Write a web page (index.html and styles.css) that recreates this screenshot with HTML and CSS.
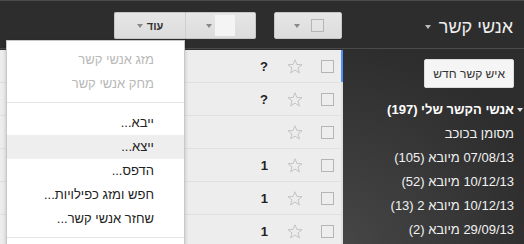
FILE: index.html
```html
<!DOCTYPE html>
<html lang="he" dir="rtl">
<head>
    <meta charset="UTF-8">
    <title>אנשי קשר</title>
    <link rel="stylesheet" href="styles.css">
</head>
<body>

<div class="topbar">
    <div class="app-title">אנשי קשר <span class="caret light"></span></div>
    <div class="toolbar">
        <div class="tb-btn select-btn">
            <span class="checkbox"></span>
            <span class="caret"></span>
        </div>
        <div class="btn-group">
            <div class="tb-btn group-btn">
                <span class="swatch"></span>
                <span class="caret"></span>
            </div>
            <div class="tb-btn more-btn">
                <span class="more-label">עוד</span>
                <span class="caret"></span>
                <div class="menu">
                    <div class="menu-item disabled">מזג אנשי קשר</div>
                    <div class="menu-item disabled">מחק אנשי קשר</div>
                    <div class="menu-sep"></div>
                    <div class="menu-item">ייבא...</div>
                    <div class="menu-item hover">ייצא...</div>
                    <div class="menu-item">הדפס...</div>
                    <div class="menu-item">חפש ומזג כפילויות...</div>
                    <div class="menu-item">שחזר אנשי קשר...</div>
                    <div class="menu-sep"></div>
                </div>
            </div>
        </div>
    </div>
</div>

<div class="main">
    <div class="sidebar">
        <button class="new-btn">איש קשר חדש</button>
        <div class="side-head"><span class="caret white"></span>אנשי הקשר שלי (197)</div>
        <div class="side-item">מסומן בכוכב</div>
        <div class="side-item">07/08/13 מיובא (105)</div>
        <div class="side-item">10/12/13 מיובא (52)</div>
        <div class="side-item">10/12/13 מיובא 2 (13)</div>
        <div class="side-item">29/09/13 מיובא (2)</div>
    </div>

    <div class="list">
        <div class="row current"><span class="checkbox"></span><svg class="star" viewBox="0 0 16 15"><polygon points="8,0.8 9.9,5.5 15,5.7 11,8.9 12.4,13.9 8,11.1 3.6,13.9 5,8.9 1,5.7 6.1,5.5"/></svg><span class="name">?</span></div>
        <div class="row"><span class="checkbox"></span><svg class="star" viewBox="0 0 16 15"><polygon points="8,0.8 9.9,5.5 15,5.7 11,8.9 12.4,13.9 8,11.1 3.6,13.9 5,8.9 1,5.7 6.1,5.5"/></svg><span class="name">?</span></div>
        <div class="row"><span class="checkbox"></span><svg class="star" viewBox="0 0 16 15"><polygon points="8,0.8 9.9,5.5 15,5.7 11,8.9 12.4,13.9 8,11.1 3.6,13.9 5,8.9 1,5.7 6.1,5.5"/></svg><span class="name"></span></div>
        <div class="row"><span class="checkbox"></span><svg class="star" viewBox="0 0 16 15"><polygon points="8,0.8 9.9,5.5 15,5.7 11,8.9 12.4,13.9 8,11.1 3.6,13.9 5,8.9 1,5.7 6.1,5.5"/></svg><span class="name">1</span></div>
        <div class="row"><span class="checkbox"></span><svg class="star" viewBox="0 0 16 15"><polygon points="8,0.8 9.9,5.5 15,5.7 11,8.9 12.4,13.9 8,11.1 3.6,13.9 5,8.9 1,5.7 6.1,5.5"/></svg><span class="name">1</span></div>
        <div class="row"><span class="checkbox"></span><svg class="star" viewBox="0 0 16 15"><polygon points="8,0.8 9.9,5.5 15,5.7 11,8.9 12.4,13.9 8,11.1 3.6,13.9 5,8.9 1,5.7 6.1,5.5"/></svg><span class="name">1</span></div>
    </div>
</div>

</body>
</html>
```

FILE: styles.css
```css
body, html {
    margin: 0;
    padding: 0;
    font-family: 'Liberation Sans', Arial, sans-serif;
    background-color: #2d2d2d;
    width: 524px;
    height: 244px;
    overflow: hidden;
}
.topbar {
    display: flex;
    height: 47px;
    border-top: 1px solid #4c4c4c;
    border-bottom: 1px solid #4a4a4a;
    background: #2d2d2d;
}
.app-title {
    width: 170px;
    padding-right: 11px;
    padding-top: 16px;
    font-size: 18px;
    line-height: 20px;
    color: #eeeeee;
}
.app-title .caret {
    margin-right: 3px;
    vertical-align: 4px;
}
.toolbar {
    display: flex;
    padding-top: 11px;
    margin-right: 1px;
}
.tb-btn {
    display: flex;
    align-items: center;
    justify-content: center;
    height: 25px;
    border: 1px solid #c6c6c6;
    background: linear-gradient(#e6e6e6, #dcdcdc);
    border-radius: 2px;
    box-sizing: content-box;
}
.select-btn {
    width: 68px;
    gap: 11px;
    padding-left: 2px;
    box-sizing: border-box;
    height: 27px;
}
.btn-group {
    display: flex;
    margin-right: 18px;
}
.group-btn {
    width: 69px;
    gap: 3px;
    border-radius: 0 2px 2px 0;
    border-left-color: #cfcfcf;
}
.more-btn {
    position: relative;
    width: 70px;
    gap: 4px;
    border-right: none;
    border-radius: 2px 0 0 2px;
}
.more-label {
    font-size: 11px;
    font-weight: bold;
    color: #333;
}
.checkbox {
    display: inline-block;
    width: 11px;
    height: 11px;
    border: 1px solid #b5b5b5;
    background: rgba(255, 255, 255, 0.1);
}
.swatch {
    display: inline-block;
    width: 20px;
    height: 21px;
    background: #f4f4f4;
}
.caret {
    display: inline-block;
    width: 0;
    height: 0;
    border-left: 3px solid transparent;
    border-right: 3px solid transparent;
    border-top: 4px solid #888;
}
.caret.light {
    border-top-color: #bbb;
}
.caret.white {
    border-top-color: #ddd;
    margin-left: 3px;
    vertical-align: 2px;
}
.menu {
    position: absolute;
    top: 27px;
    right: 0;
    width: 177px;
    padding: 7px 0 30px;
    background: #fff;
    border: 1px solid #c8c8c8;
    box-shadow: 0 2px 4px rgba(0, 0, 0, 0.2);
    z-index: 10;
}
.menu-item {
    height: 24px;
    line-height: 24px;
    padding-right: 30px;
    font-size: 13px;
    color: #222;
}
.menu-item.disabled {
    color: #b8b8b8;
}
.menu-item.hover {
    background: #eeeeee;
}
.menu-sep {
    height: 1px;
    background: #e5e5e5;
    margin: 6px 0 8px;
}
.main {
    display: flex;
    margin-top: 1px;
    height: 195px;
}
.sidebar {
    width: 171px;
    padding-right: 10px;
    padding-top: 9px;
    background: radial-gradient(circle at 0 100%, #464646, #2d2d2d 75%);
    color: #f2f2f2;
}
.new-btn {
    display: block;
    height: 29px;
    padding: 0 8px;
    border: 1px solid #dcdcdc;
    border-radius: 2px;
    background: #f5f5f5;
    font-family: inherit;
    font-size: 12px;
    color: #333;
    margin-bottom: 10px;
}
.side-head {
    height: 24px;
    line-height: 24px;
    margin-right: -10px;
    padding-right: 1px;
    font-size: 13px;
    font-weight: bold;
    color: #fff;
    white-space: nowrap;
}
.side-item {
    height: 24px;
    line-height: 24px;
    font-size: 13px;
    white-space: nowrap;
}
.list {
    width: 341px;
    background: #ededed;
    border-right: 2px solid #e0e0e0;
}
.row {
    display: flex;
    align-items: center;
    height: 32px;
    border-bottom: 1px solid #e0e0e0;
    padding-right: 7px;
}
.row.current {
    box-shadow: inset -2px 0 0 #4d90fe;
    margin-right: -2px;
    padding-right: 9px;
}
.row .star {
    width: 16px;
    height: 15px;
    margin-right: 18px;
    fill: none;
    stroke: #c4c4c4;
    stroke-width: 1;
}
.row .name {
    margin-right: 19px;
    font-size: 13px;
    font-weight: bold;
    color: #222;
}
```
